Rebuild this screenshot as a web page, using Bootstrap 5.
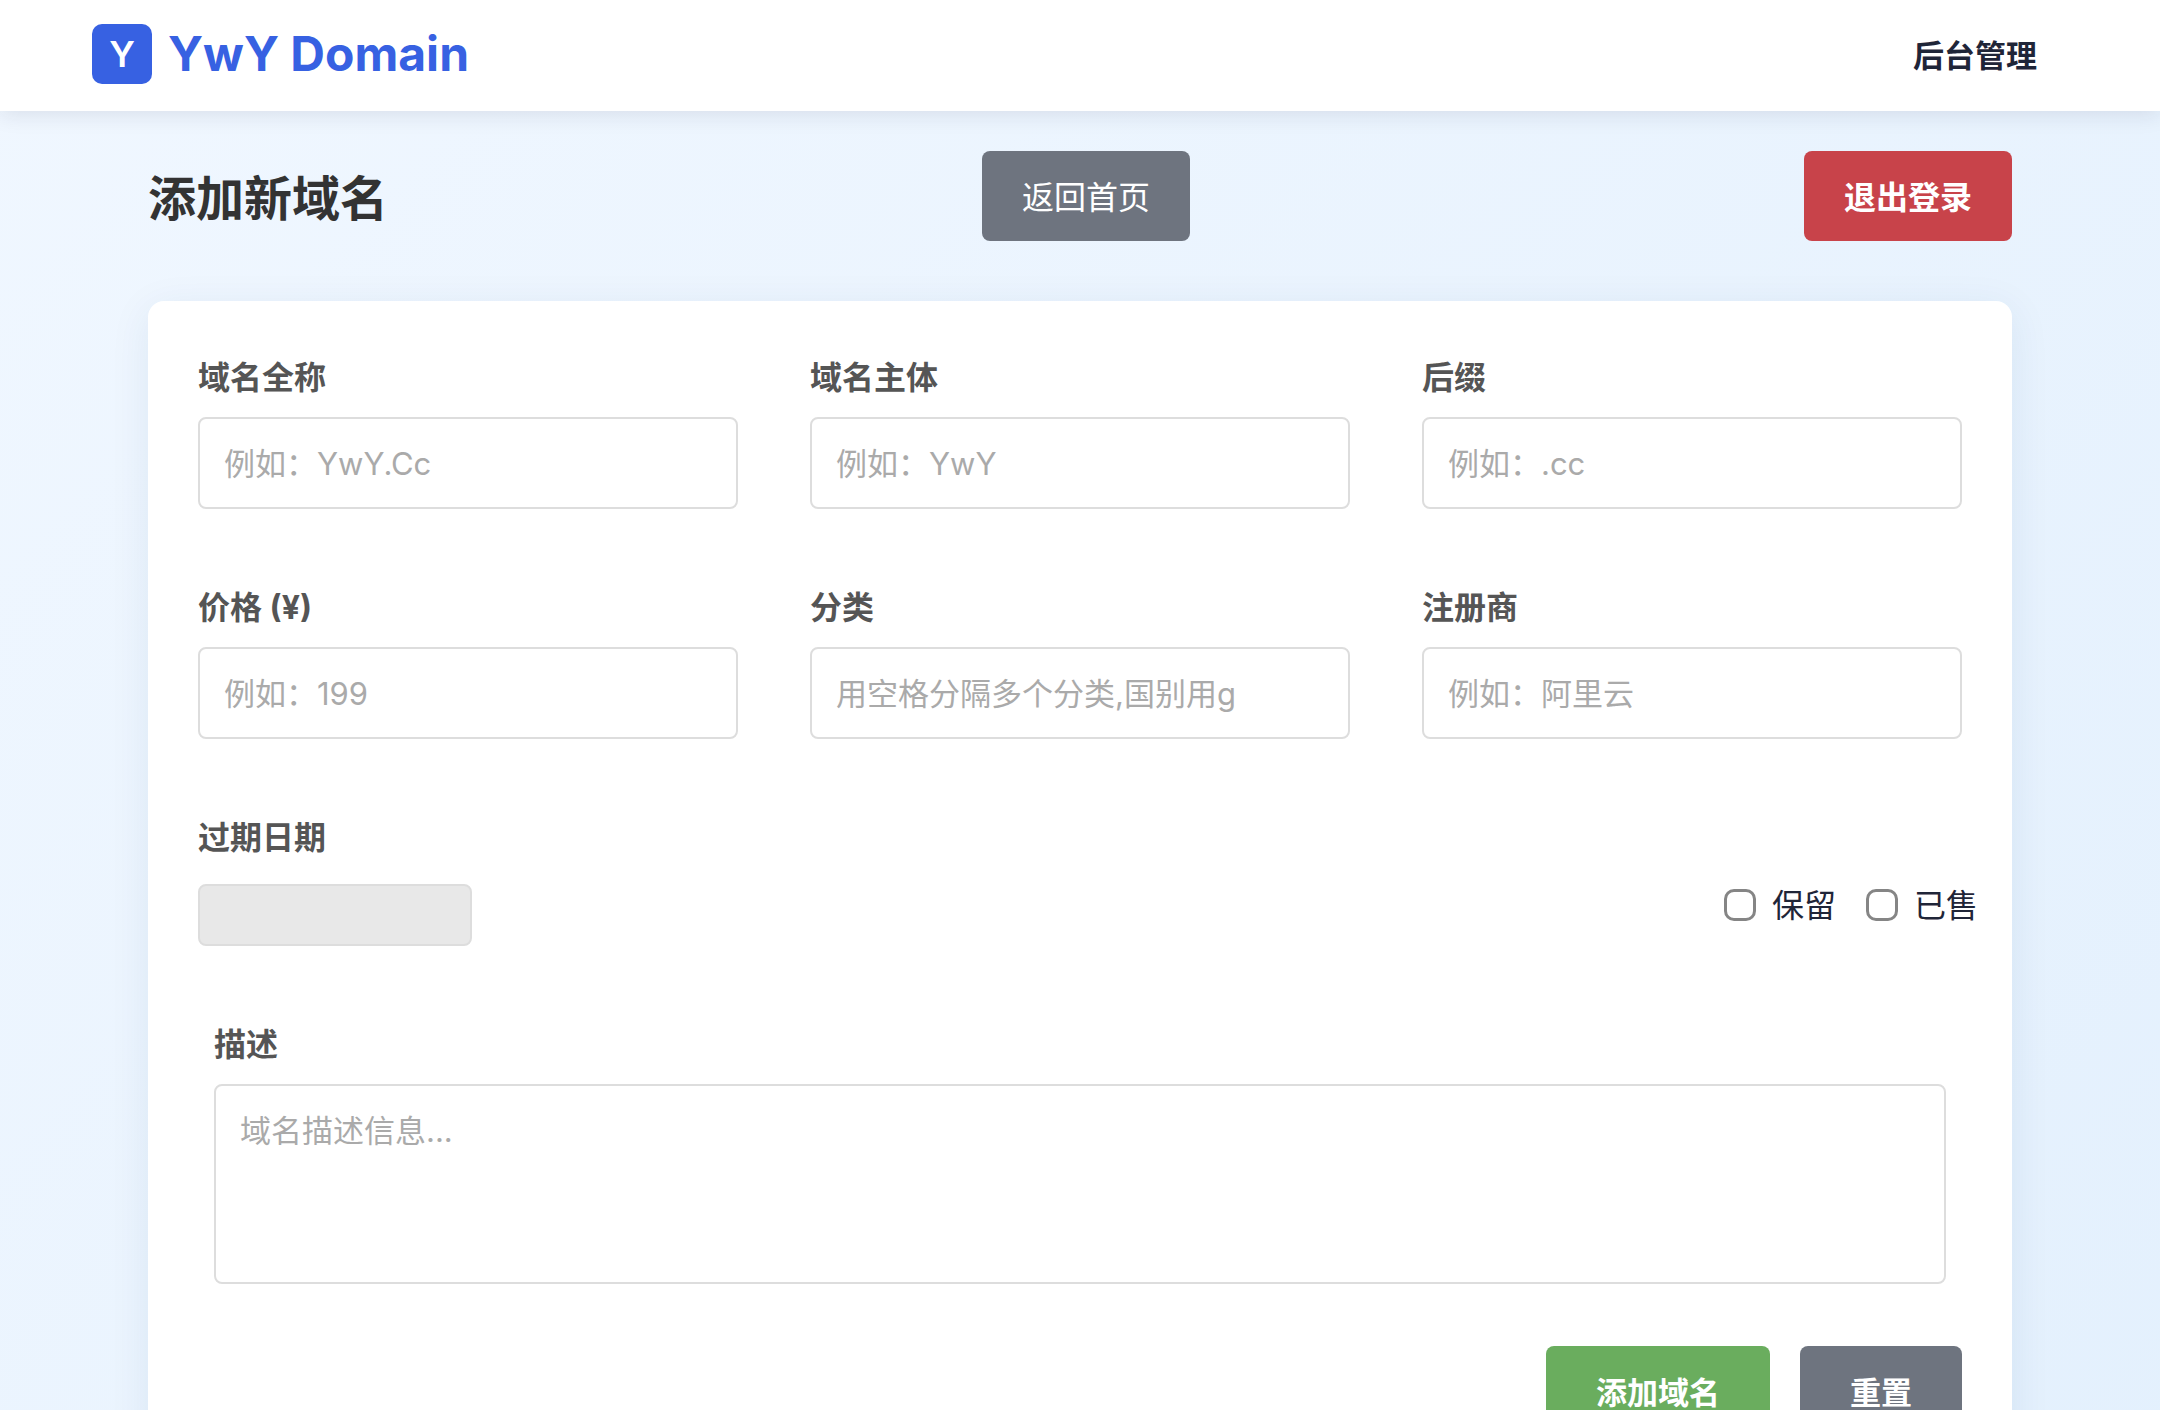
<!DOCTYPE html>
<html lang="zh-CN">
<head>
<meta charset="utf-8">
<meta name="viewport" content="width=device-width, initial-scale=1">
<title>添加新域名 - YwY Domain</title>
<link href="https://cdn.jsdelivr.net/npm/bootstrap@5.3.0/dist/css/bootstrap.min.css" rel="stylesheet">
<style>
  body {
    font-family: Inter, "Noto Sans CJK SC", sans-serif;
    font-size: 32px;
    line-height: 50px;
    color: #1f2538;
    background: linear-gradient(135deg, #f0f7ff 0%, #e3f0fd 100%);
    min-height: 100vh;
  }
  .site-nav {
    padding: 24px 92px 27px;
    background: rgba(255, 255, 255, .97);
    box-shadow: 0 4px 20px rgba(30, 30, 60, .1);
  }
  .brand-link { gap: 16px; color: #3761e2; font-size: 48px; line-height: 60px; font-weight: 700; }
  .brand-link:hover { color: #3761e2; }
  .brand-box {
    width: 60px; height: 60px; border-radius: 10px;
    background: #3761e2; color: #fff; font-size: 36px; font-weight: 600;
  }
  .site-nav .nav-link { padding: 4px 31px 0; font-size: 31px; font-weight: 600; color: #1f2538; }
  .page-wrap { padding: 40px 148px 80px; }
  .page-head { margin-bottom: 60px; }
  .page-title { padding-top: 6px; font-size: 48px; font-weight: 700; color: #333; line-height: 60px; }
  .btn { border: 0; border-radius: 8px; font-size: 32px; line-height: 50px; padding: 22px 40px 18px; }
  .btn-slate, .btn-slate:hover { background: #6e747f; color: #fff; }
  .btn-brick, .btn-brick:hover { background: #c8434a; color: #fff; font-weight: 700; }
  .btn-leaf, .btn-leaf:hover { background: #6aad5e; color: #fff; }
  .btn-home { margin-right: 20px; }
  .form-card {
    border: 0; border-radius: 16px; padding: 50px;
    box-shadow: 0 8px 40px rgba(30, 60, 110, .08);
  }
  .field-row { --bs-gutter-x: 72px; --bs-gutter-y: 72px; }
  .form-label { display: block; margin-bottom: 12px; font-weight: 700; color: #555; line-height: 54px; }
  .form-control {
    border: 2px solid #ddd; border-radius: 8px; padding: 21px 24px 19px;
    font-size: 31px; line-height: 48px; color: #333;
  }
  .form-control::placeholder { color: #aaa; }
  .meta-row { margin-top: 72px; }
  .date-label { margin-bottom: 19px; }
  .date-box { width: 274px; height: 62px; padding: 0 24px; background: #e8e8e8; }
  .check-group { gap: 30px; margin: 0 -16px 16px 0; }
  .form-check { gap: 16px; min-height: 0; padding: 0; margin: 0; }
  .form-check .form-check-input {
    float: none; width: 32px; height: 32px; margin: 0;
    border: 3px solid #858585; border-radius: 10px;
  }
  .form-check-label { padding-top: 2px; line-height: 48px; }
  .desc-block { margin: 72px 16px 0; }
  .desc-box { height: 200px; resize: none; }
  .form-actions { gap: 30px; margin-top: 62px; }
  .form-actions .btn { font-size: 31px; font-weight: 600; padding: 22px 50px 18px; }
</style>
<script src="https://cdn.jsdelivr.net/npm/bootstrap@5.3.0/dist/js/bootstrap.bundle.min.js"></script>
</head>
<body>
<nav class="site-nav d-flex justify-content-between align-items-center">
  <a class="brand-link d-flex align-items-center text-decoration-none" href="#">
    <span class="brand-box d-flex align-items-center justify-content-center">Y</span>
    <span>YwY Domain</span>
  </a>
  <a class="nav-link" href="#">后台管理</a>
</nav>

<main class="page-wrap container-fluid">
  <header class="page-head d-flex justify-content-between align-items-center">
    <h1 class="page-title mb-0">添加新域名</h1>
    <a class="btn btn-slate btn-home" href="#">返回首页</a>
    <button class="btn btn-brick" type="button">退出登录</button>
  </header>

  <form class="form-card card">
    <div class="row field-row">
      <div class="col-4">
        <label class="form-label" for="full">域名全称</label>
        <input class="form-control" id="full" type="text" placeholder="例如：YwY.Cc">
      </div>
      <div class="col-4">
        <label class="form-label" for="main">域名主体</label>
        <input class="form-control" id="main" type="text" placeholder="例如：YwY">
      </div>
      <div class="col-4">
        <label class="form-label" for="suffix">后缀</label>
        <input class="form-control" id="suffix" type="text" placeholder="例如：.cc">
      </div>
      <div class="col-4">
        <label class="form-label" for="price">价格 (¥)</label>
        <input class="form-control" id="price" type="text" inputmode="numeric" placeholder="例如：199">
      </div>
      <div class="col-4">
        <label class="form-label" for="cats">分类</label>
        <input class="form-control" id="cats" type="text" placeholder="用空格分隔多个分类,国别用g">
      </div>
      <div class="col-4">
        <label class="form-label" for="registrar">注册商</label>
        <input class="form-control" id="registrar" type="text" placeholder="例如：阿里云">
      </div>
    </div>

    <div class="meta-row d-flex justify-content-between align-items-end">
      <div>
        <label class="form-label date-label" for="expire">过期日期</label>
        <input class="form-control date-box" id="expire" type="text">
      </div>
      <div class="check-group d-flex">
        <div class="form-check d-flex align-items-center">
          <input class="form-check-input" id="reserved" type="checkbox">
          <label class="form-check-label" for="reserved">保留</label>
        </div>
        <div class="form-check d-flex align-items-center">
          <input class="form-check-input" id="sold" type="checkbox">
          <label class="form-check-label" for="sold">已售</label>
        </div>
      </div>
    </div>

    <div class="desc-block">
      <label class="form-label" for="desc">描述</label>
      <textarea class="form-control desc-box" id="desc" placeholder="域名描述信息..."></textarea>
    </div>

    <div class="form-actions d-flex justify-content-end">
      <button class="btn btn-leaf" type="submit">添加域名</button>
      <button class="btn btn-slate" type="reset">重置</button>
    </div>
  </form>
</main>
</body>
</html>
